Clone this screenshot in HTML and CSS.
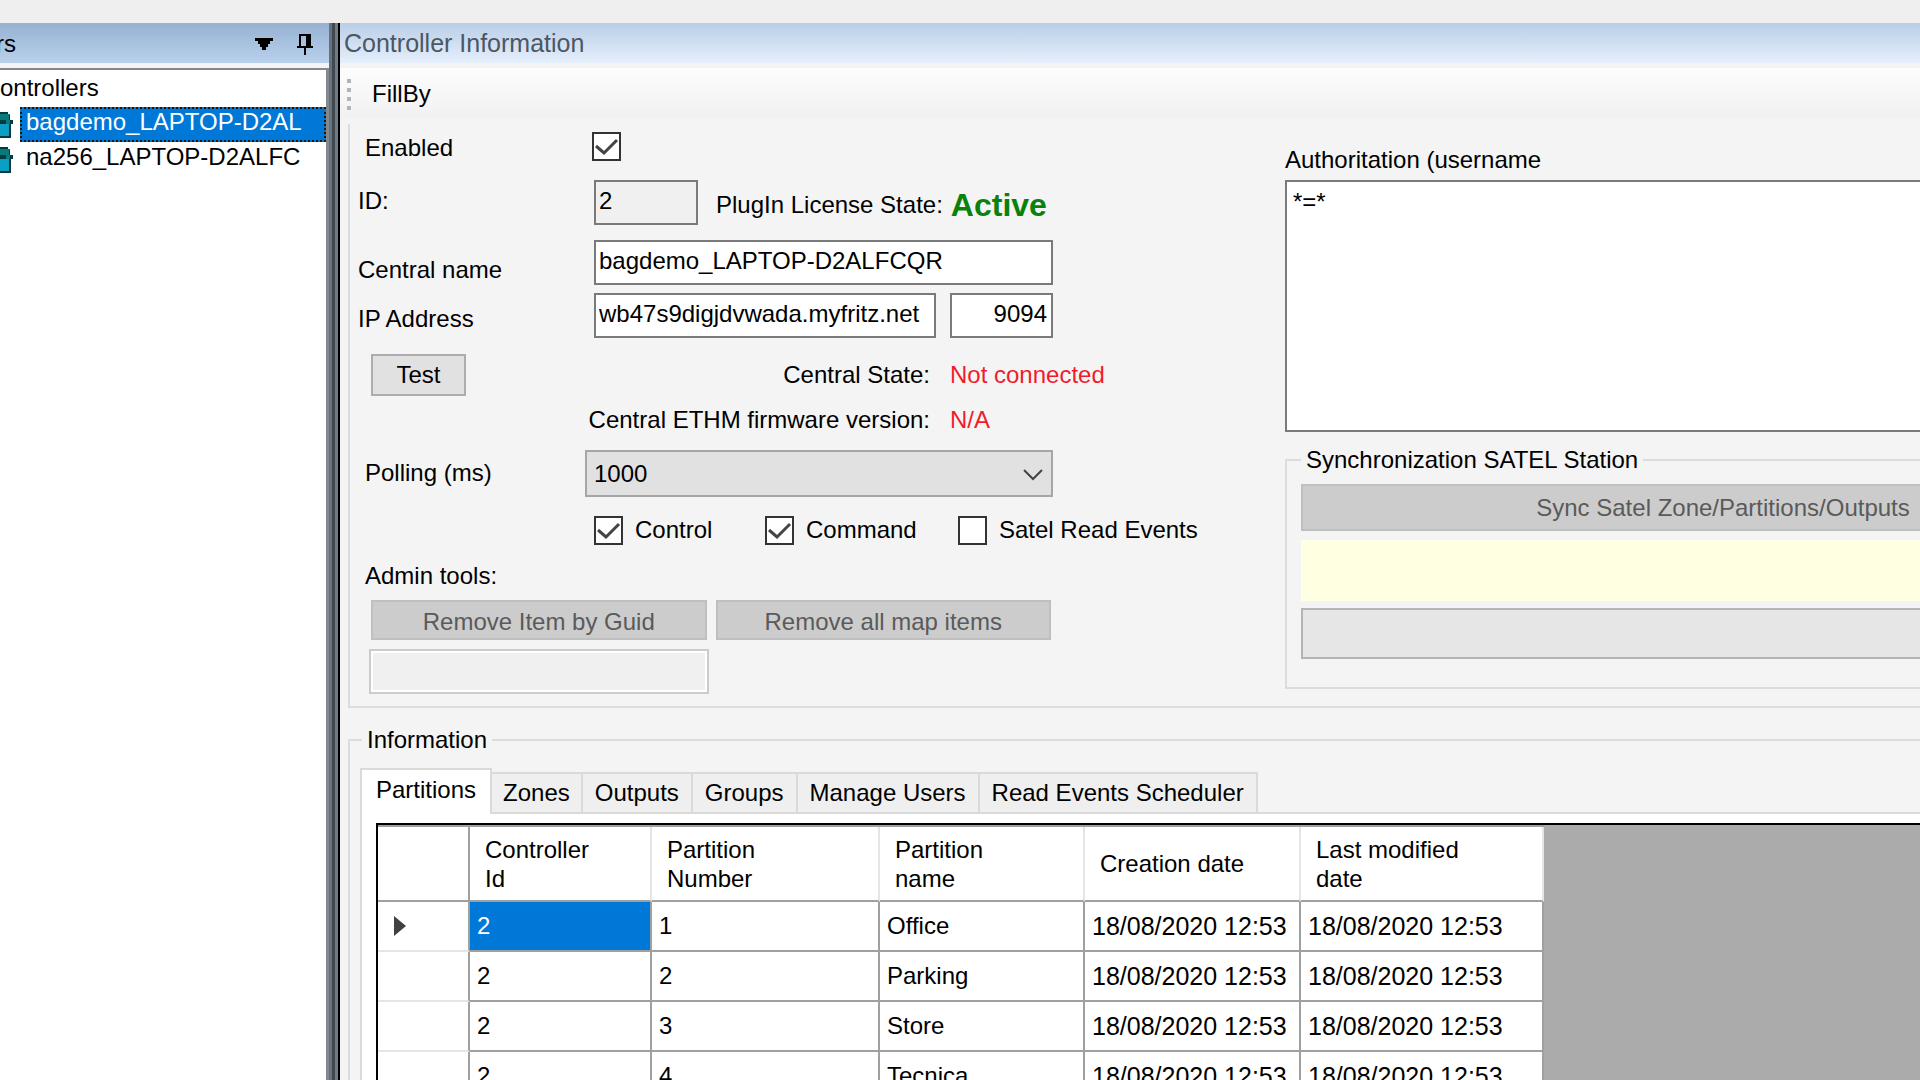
FILE: index.html
```html
<!DOCTYPE html>
<html lang="en">
<head>
    <meta charset="UTF-8">
    <meta name="viewport" content="width=device-width, initial-scale=1.0">
    <title>Controller Information</title>
    <link rel="stylesheet" href="styles.css">
</head>
<body>
    <div class="topbar"></div>
    <div class="window">
        <aside class="side">
            <header class="side-head">
                <span>rs</span>
                <button class="icon-btn" aria-label="Menu">
                    <svg width="18" height="12" viewBox="0 0 18 12"><path d="M0 0h18v3h-3v3h-2v3h-2v3H7V9H5V6H3V3H0z"/></svg>
                </button>
                <button class="icon-btn" aria-label="Pin">
                    <svg width="16" height="21" viewBox="0 0 16 21"><path d="M2 0h12v12h2v2H9v7H7v-7H0v-2h2zM4 2v10h5V2z" fill-rule="evenodd"/></svg>
                </button>
            </header>
            <ul class="tree">
                <li class="root">ontrollers</li>
                <li>
                    <svg class="node" width="14" height="28" viewBox="0 0 14 28"><path d="M0 13h10v12H0z" fill="#0b9fc4"/><path d="M0 3h10v10H0z" fill="#087a7c"/><path d="M0 1h8v2H0zM0 9h6v4H0zM10 9h3v4h-3zM0 25h10v2H0zM9 13h2v14H9zM9 4h1v5H9z" fill="#033b44"/></svg>
                    <span class="item selected">bagdemo_LAPTOP-D2AL</span>
                </li>
                <li>
                    <svg class="node" width="14" height="28" viewBox="0 0 14 28"><path d="M0 13h10v12H0z" fill="#0b9fc4"/><path d="M0 3h10v10H0z" fill="#087a7c"/><path d="M0 1h8v2H0zM0 9h6v4H0zM10 9h3v4h-3zM0 25h10v2H0zM9 13h2v14H9zM9 4h1v5H9z" fill="#033b44"/></svg>
                    <span class="item">na256_LAPTOP-D2ALFC</span>
                </li>
            </ul>
        </aside>
        <div class="splitter"></div>
        <main class="main">
            <header class="main-head">Controller Information</header>
            <div class="toolbar">
                <span class="grip"><i></i><i></i><i></i><i></i></span>
                <button class="tool">FillBy</button>
            </div>

            <section class="details">
                <form class="form">
                    <div class="row enabled">
                        <label class="name wide" for="enabled">Enabled</label>
                        <input type="checkbox" id="enabled" checked>
                    </div>
                    <div class="row id">
                        <label class="name" for="id">ID:</label>
                        <input class="box small" type="text" id="id" value="2" readonly>
                        <span class="license">PlugIn License State:</span>
                        <strong class="active">Active</strong>
                    </div>
                    <div class="row central">
                        <label class="name low" for="central">Central name</label>
                        <input class="box full" type="text" id="central" value="bagdemo_LAPTOP-D2ALFCQR">
                    </div>
                    <div class="row ip">
                        <label class="name" for="ip">IP Address</label>
                        <input class="box host" type="text" id="ip" value="wb47s9digjdvwada.myfritz.net">
                        <input class="box port" type="text" aria-label="Port" value="9094">
                    </div>
                    <div class="row state">
                        <button class="btn test" type="button">Test</button>
                        <span class="state-name">Central State:</span>
                        <span class="error">Not connected</span>
                    </div>
                    <div class="row firmware">
                        <span class="state-name">Central ETHM firmware version:</span>
                        <span class="error">N/A</span>
                    </div>
                    <div class="row polling">
                        <label class="name wide" for="polling">Polling (ms)</label>
                        <div class="select">
                            <select id="polling"><option>1000</option></select>
                            <svg width="20" height="12" viewBox="0 0 20 12"><path d="M1 1l9 9 9-9" fill="none" stroke="#444" stroke-width="2"/></svg>
                        </div>
                    </div>
                    <div class="checks">
                        <label class="check"><input type="checkbox" checked>Control</label>
                        <label class="check"><input type="checkbox" checked>Command</label>
                        <label class="check"><input type="checkbox">Satel Read Events</label>
                    </div>
                    <div class="row admin"><label class="name wide" for="guid">Admin tools:</label></div>
                    <div class="row admin-buttons">
                        <button class="btn" type="button" disabled>Remove Item by Guid</button>
                        <button class="btn" type="button" disabled>Remove all map items</button>
                    </div>
                    <input class="guid" type="text" id="guid" disabled>
                </form>

                <div class="auth">
                    <label for="auth">Authoritation (username</label>
                    <textarea id="auth">*=*</textarea>
                    <fieldset class="sync">
                        <legend>Synchronization SATEL Station</legend>
                        <button class="btn" type="button" disabled>Sync Satel Zone/Partitions/Outputs</button>
                        <div class="message"></div>
                        <div class="progress"></div>
                    </fieldset>
                </div>
            </section>

            <fieldset class="info">
                <legend>Information</legend>
                <nav class="tabs">
                    <button class="tab current">Partitions</button>
                    <button class="tab">Zones</button>
                    <button class="tab">Outputs</button>
                    <button class="tab">Groups</button>
                    <button class="tab">Manage Users</button>
                    <button class="tab">Read Events Scheduler</button>
                </nav>
                <div class="pane">
                    <div class="grid">
                        <table>
                            <colgroup>
                                <col class="c-head"><col class="c-id"><col class="c-number"><col class="c-name"><col class="c-created"><col class="c-modified">
                            </colgroup>
                            <thead>
                                <tr><th></th><th>Controller<br>Id</th><th>Partition<br>Number</th><th>Partition<br>name</th><th>Creation date</th><th>Last modified<br>date</th></tr>
                            </thead>
                            <tbody>
                                <tr><td class="marker"><svg width="12" height="20" viewBox="0 0 12 20"><path d="M0 0l12 10L0 20z" fill="#404040"/></svg></td><td class="picked">2</td><td>1</td><td>Office</td><td class="date">18/08/2020 12:53</td><td class="date">18/08/2020 12:53</td></tr>
                                <tr><td class="marker"></td><td>2</td><td>2</td><td>Parking</td><td class="date">18/08/2020 12:53</td><td class="date">18/08/2020 12:53</td></tr>
                                <tr><td class="marker"></td><td>2</td><td>3</td><td>Store</td><td class="date">18/08/2020 12:53</td><td class="date">18/08/2020 12:53</td></tr>
                                <tr><td class="marker"></td><td>2</td><td>4</td><td>Tecnica</td><td class="date">18/08/2020 12:53</td><td class="date">18/08/2020 12:53</td></tr>
                            </tbody>
                        </table>
                    </div>
                </div>
            </fieldset>
        </main>
    </div>
</body>
</html>
```

FILE: styles.css
```css
* { box-sizing: border-box; }
body { margin: 0; height: 100vh; overflow: hidden; display: flex; flex-direction: column; background: #f4f4f4; color: #000; font: 24px/28px "Liberation Sans", Arial, sans-serif; }
button, input, select, textarea { font: inherit; color: inherit; margin: 0; border-radius: 0; }
button { padding: 0; border: 0; background: none; }
svg { display: block; }

.topbar { height: 23px; flex: none; background: #efefef; }
.window { flex: 1; min-height: 0; display: flex; }

/* controller tree */
.side { width: 329px; flex: none; display: flex; flex-direction: column; }
.side-head { height: 40px; flex: none; display: flex; align-items: center; gap: 24px; padding: 2px 16px 0 0; margin-bottom: 5px; background: linear-gradient(#95b1d2, #bad1ec); }
.side-head span { flex: 1; margin-left: -4px; }
.tree { flex: 1; margin: 0; padding: 2px 0; list-style: none; background: #fff; border-top: 2px solid #828790; border-right: 3px solid #828790; }
.tree li { height: 35px; display: flex; align-items: center; gap: 6px; white-space: nowrap; }
.tree .root { padding-bottom: 4px; }
.node { flex: none; }
.item { flex: 1; height: 35px; padding-left: 4px; border: 2px solid transparent; line-height: 26px; }
.selected { background: #0078d7; color: #fff; border: 2px dotted #24180c; }

.splitter { width: 11px; flex: none; background: linear-gradient(90deg, #68727a 0 3px, #3f494f 3px 6px, #717b82 6px 9px, #000 9px); }

/* main panel */
.main { flex: 1; min-width: 0; display: flex; flex-direction: column; overflow: hidden; }
.main-head { height: 40px; flex: none; margin-bottom: 5px; padding: 6px 4px; font-size: 25px; color: #4b5764; background: linear-gradient(#b9cee6, #e6effc); }
.toolbar { height: 50px; flex: none; display: flex; align-items: center; gap: 21px; padding: 2px 7px 0; background: linear-gradient(#fdfdfd, #f1f1f1); }
.grip { display: grid; gap: 5px; }
.grip i { width: 4px; height: 4px; background: #b4b4b4; }

.details { flex: none; display: flex; gap: 232px; margin: 6px 0 18px 8px; border-left: 2px solid #dcdcdc; border-bottom: 2px solid #dcdcdc; }
.form { width: 703px; flex: none; padding-bottom: 12px; }
.row { display: flex; align-items: center; white-space: nowrap; }
.name { width: 236px; flex: none; margin-left: 8px; }
.wide { width: 228px; margin-left: 15px; padding-top: 4px; }
.low { padding-top: 16px; }
.enabled { height: 44px; }
.id { height: 69px; }
.id .name { padding-bottom: 4px; }
.central { height: 50px; }
.ip { height: 56px; gap: 14px; }
.ip .name { margin-right: -14px; padding-top: 8px; }
.state { height: 62px; padding-top: 2px; }
.firmware { height: 29px; }
.polling { height: 78px; }
.polling .name { padding-top: 0; }
.polling .wide { width: 229px; }
.checks { display: grid; grid-template-columns: 171px 193px auto; height: 36px; padding-left: 244px; white-space: nowrap; }
.admin { height: 52px; }
.admin-buttons { gap: 9px; padding: 0 2px 0 21px; }
.admin-buttons .btn { flex: 1; height: 40px; padding-top: 4px; }

input[type=checkbox] { appearance: none; width: 29px; height: 29px; flex: none; background: #fff; border: 2px solid #333; }
input[type=checkbox]:checked { background: #fff url("data:image/svg+xml,%3Csvg xmlns='http://www.w3.org/2000/svg' viewBox='0 0 25 25'%3E%3Cpath d='M2 12l8 7L23 6' fill='none' stroke='%23444' stroke-width='3'/%3E%3C/svg%3E"); }
.enabled input { margin-left: -1px; }
.check { display: flex; align-items: center; gap: 12px; }

.box { height: 45px; padding: 0 4px 2px 3px; background: #fff; border: 2px solid #7a7a7a; }
.small { width: 104px; padding-bottom: 4px; background: #f0f0f0; }
.full { width: 459px; }
.host { width: 342px; }
.port { width: 103px; text-align: right; }
.license { margin: 4px 0 0 18px; }
.active { margin: 4px 0 0 8px; font-size: 32px; color: #088208; }
.state-name { width: 345px; margin-left: auto; text-align: right; }
.state .error, .firmware .error { width: 103px; margin-left: 20px; color: #f21b2b; }

.btn { background: #e1e1e1; border: 2px solid #adadad; }
.btn:disabled { background: #ccc; border-color: #bfbfbf; color: #5a5a5a; }
.test { width: 95px; height: 42px; margin-left: 21px; }
.select { position: relative; flex: 1; margin-left: -9px; }
.select select { appearance: none; display: block; width: 100%; height: 47px; padding: 2px 7px 0; background: #e1e1e1; border: 2px solid #a6a6a6; }
.select svg { position: absolute; right: 10px; top: 19px; pointer-events: none; }
.guid { display: block; width: 340px; height: 45px; margin: 9px 0 0 19px; background: #f0f0f0; border: 2px solid #ccc; outline: 2px solid #fff; outline-offset: -4px; }

/* the right column runs past the window edge */
.auth { width: 880px; flex: none; padding-top: 22px; }
.auth textarea { display: block; width: 100%; height: 252px; margin: 6px 0 14px; padding: 6px; resize: none; background: #fff; border: 2px solid #7a7a7a; }
.sync { height: 243px; margin: 0; padding: 10px 18px 0 14px; border: 2px solid #dcdcdc; }
legend { padding: 0 5px; }
.sync .btn { display: block; width: 100%; height: 47px; }
.message { height: 61px; margin: 9px 0 7px; background: #ffffe1; }
.progress { height: 51px; background: #e6e6e6; border: 2px solid #b4b4b4; }

/* information tabs */
.info { flex: 1; min-height: 0; min-width: 0; display: flex; flex-direction: column; margin: 0 0 0 8px; padding: 14px 0 0 10px; border: 2px solid #dcdcdc; border-width: 2px 0 0 2px; }
.info legend { margin-left: 2px; }
.tabs { display: flex; align-items: flex-end; flex: none; }
.tab { height: 40px; padding: 0 12px; background: #efefef; border: 2px solid #dadada; border-width: 2px 2px 0 0; }
.tab:nth-child(2) { padding: 0 11px; }
.current { height: 46px; padding: 0 14px 4px; margin-bottom: -2px; background: #fff; border-left-width: 2px; z-index: 1; }
.pane { flex: 1; min-height: 0; padding: 9px 0 0 14px; background: #fff; border: 2px solid #dadada; border-width: 2px 0 0 2px; }
.grid { height: 280px; background: #ababab; border: 2px solid #000; border-width: 2px 0 0 2px; }

table { table-layout: fixed; width: 1166px; border-collapse: separate; border-spacing: 0; background: #fff; border-top: 2px solid #a0a0a0; }
.c-head { width: 92px; }
.c-id { width: 182px; }
.c-number { width: 228px; }
.c-name { width: 205px; }
.c-created { width: 216px; }
.c-modified { width: 243px; }
th { height: 75px; padding: 0 0 0 15px; text-align: left; font-weight: normal; line-height: 29px; border-right: 2px solid #e5e5e5; border-bottom: 2px solid #a0a0a0; }
td { height: 50px; padding: 0 0 0 7px; border-right: 2px solid #a0a0a0; border-bottom: 2px solid #a0a0a0; }
th:first-child { border-right-color: #a0a0a0; }
.marker { padding-left: 16px; border-bottom-color: #e5e5e5; }
.picked { background: #0078d7; color: #fff; }
.date { font-size: 25px; white-space: nowrap; }
```
